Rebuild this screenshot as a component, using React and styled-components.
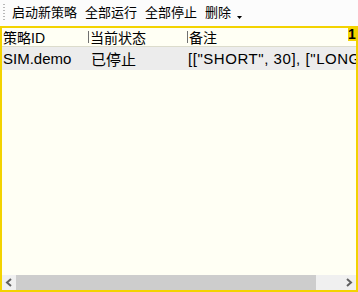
import React from 'react';
import styled, { createGlobalStyle } from 'styled-components';

const GlobalStyle = createGlobalStyle`
  html, body {
    margin: 0;
    padding: 0;
    background: #ffffff;
  }
  body {
    font-family: "Liberation Sans", "Noto Sans CJK SC", sans-serif;
    color: #000;
  }
  * {
    box-sizing: border-box;
  }
`;

const columns = [
  { key: 'id', title: '策略ID', width: 86, pad: 1, spacing: 0 },
  { key: 'status', title: '当前状态', width: 99, pad: 3, spacing: 0 },
  { key: 'note', title: '备注', width: null, pad: 1, spacing: 0.55 },
];

const rows = [
  { id: 'SIM.demo', status: '已停止', note: '[["SHORT", 30], ["LONG", 60]]' },
];

const Page = styled.div`
  width: 358px;
  height: 292px;
  display: flex;
  flex-direction: column;
  overflow: hidden;
`;

const Toolbar = styled.div`
  height: 26px;
  display: flex;
  align-items: center;
  padding-left: 3px;
  background: #fcfcfc;
`;

const Grip = styled.div`
  width: 2px;
  height: 18px;
  margin-right: 3px;
  background: repeating-linear-gradient(to bottom, #b8b8b8 0 1px, transparent 1px 3px);
`;

const ToolButton = styled.button`
  border: none;
  background: none;
  padding: 0 4px;
  margin: 0;
  font-family: inherit;
  font-size: 13px;
  line-height: 20px;
  color: #000;
  cursor: pointer;
`;

const Caret = styled.svg`
  margin-left: 2px;
  margin-top: 8px;
`;

const Panel = styled.div`
  position: relative;
  flex: 1;
  display: flex;
  flex-direction: column;
  border: 2px solid #f3d300;
  background: #fffff4;
  min-height: 0;
`;

const Badge = styled.div`
  position: absolute;
  top: -1px;
  right: 0;
  width: 8px;
  height: 14px;
  background: #f3d300;
  font-size: 14px;
  font-weight: bold;
  line-height: 14px;
  text-align: center;
`;

const Table = styled.div`
  flex: 1;
  overflow: hidden;
`;

const HeadRow = styled.div`
  display: flex;
  height: 19px;
  border-bottom: 1px solid #dcdccc;
`;

const HeadCell = styled.div`
  display: flex;
  align-items: center;
  flex: ${p => (p.$width ? `0 0 ${p.$width}px` : '1')};
  padding-left: ${p => (p.$first ? 1 : 0)}px;
  font-size: 14px;
  white-space: nowrap;
  overflow: hidden;
`;

const Divider = styled.span`
  flex: none;
  width: 1px;
  height: 12px;
  background: #707070;
  margin-right: 1px;
`;

const Row = styled.div`
  display: flex;
  height: 23px;
  background: #ececec;
`;

const Cell = styled.div`
  display: flex;
  align-items: center;
  flex: ${p => (p.$width ? `0 0 ${p.$width}px` : '1')};
  padding-left: ${p => p.$pad}px;
  font-size: 15px;
  letter-spacing: ${p => p.$spacing}px;
  white-space: nowrap;
  overflow: hidden;
`;

const ScrollBar = styled.div`
  height: 15px;
  display: flex;
  background: #f0f0f0;
`;

const ArrowButton = styled.div`
  width: 14px;
  display: flex;
  align-items: center;
  justify-content: center;
`;

const Track = styled.div`
  flex: 1;
  display: flex;
`;

const Thumb = styled.div`
  width: 300px;
  background: #cdcdcd;
`;

const Arrow = ({ dir }) => (
  <svg width="8" height="9" viewBox="0 0 8 9">
    <polyline
      points={dir === 'left' ? '6,1 2,4.5 6,8' : '2,1 6,4.5 2,8'}
      fill="none"
      stroke="#606060"
      strokeWidth="2"
    />
  </svg>
);

const App = () => (
  <>
    <GlobalStyle />
    <Page>
      <Toolbar>
        <Grip />
        <ToolButton>启动新策略</ToolButton>
        <ToolButton>全部运行</ToolButton>
        <ToolButton>全部停止</ToolButton>
        <ToolButton>删除</ToolButton>
        <Caret width="5" height="3" viewBox="0 0 5 3">
          <polygon points="0,0 5,0 2.5,3" fill="#000" />
        </Caret>
      </Toolbar>
      <Panel>
        <Table>
          <HeadRow>
            {columns.map((c, i) => (
              <HeadCell key={c.key} $width={c.width} $first={i === 0}>
                {i > 0 && <Divider />}
                {c.title}
              </HeadCell>
            ))}
          </HeadRow>
          {rows.map(r => (
            <Row key={r.id}>
              {columns.map(c => (
                <Cell key={c.key} $width={c.width} $pad={c.pad} $spacing={c.spacing}>
                  {r[c.key]}
                </Cell>
              ))}
            </Row>
          ))}
        </Table>
        <ScrollBar>
          <ArrowButton>
            <Arrow dir="left" />
          </ArrowButton>
          <Track>
            <Thumb />
          </Track>
          <ArrowButton>
            <Arrow dir="right" />
          </ArrowButton>
        </ScrollBar>
        <Badge>1</Badge>
      </Panel>
    </Page>
  </>
);

export default App;
